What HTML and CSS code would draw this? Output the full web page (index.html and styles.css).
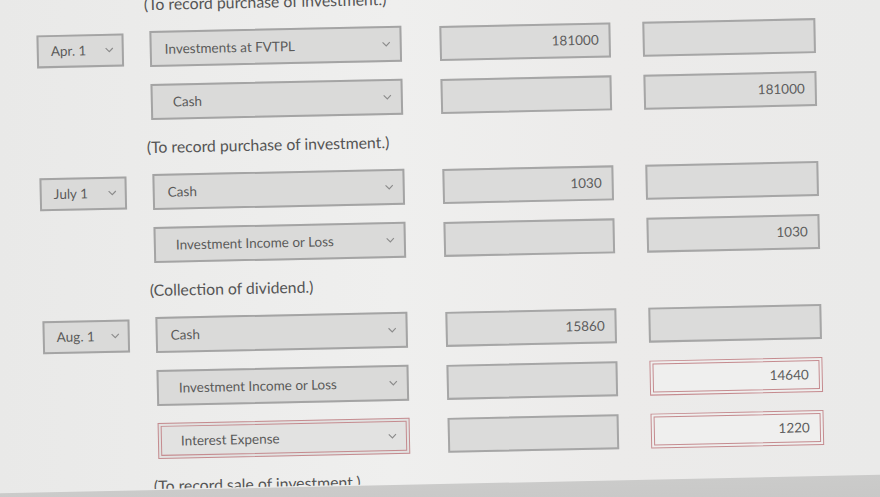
FILE: index.html
```html
<!DOCTYPE html>
<html lang="en">
<head>
<meta charset="utf-8">
<title>Journal entries</title>
<link rel="stylesheet" href="styles.css">
</head>
<body>
<div class="page">
  <div class="sheet">
    <p class="note">(To record purchase of investment.)</p>

    <div class="row">
      <div class="cell"><div class="select date"><span>Apr. 1</span><svg class="chev" viewBox="0 0 10 6"><polyline points="1,1 5,5 9,1"/></svg></div></div>
      <div class="cell"><div class="select account"><span>Investments at FVTPL</span><svg class="chev" viewBox="0 0 10 6"><polyline points="1,1 5,5 9,1"/></svg></div></div>
      <div class="cell"><div class="amount debit">181000</div></div>
      <div class="cell"><div class="amount credit"></div></div>
    </div>

    <div class="row">
      <div class="cell"></div>
      <div class="cell"><div class="select account indent"><span>Cash</span><svg class="chev" viewBox="0 0 10 6"><polyline points="1,1 5,5 9,1"/></svg></div></div>
      <div class="cell"><div class="amount debit"></div></div>
      <div class="cell"><div class="amount credit">181000</div></div>
    </div>

    <p class="note">(To record purchase of investment.)</p>

    <div class="row">
      <div class="cell"><div class="select date"><span>July 1</span><svg class="chev" viewBox="0 0 10 6"><polyline points="1,1 5,5 9,1"/></svg></div></div>
      <div class="cell"><div class="select account"><span>Cash</span><svg class="chev" viewBox="0 0 10 6"><polyline points="1,1 5,5 9,1"/></svg></div></div>
      <div class="cell"><div class="amount debit">1030</div></div>
      <div class="cell"><div class="amount credit"></div></div>
    </div>

    <div class="row">
      <div class="cell"></div>
      <div class="cell"><div class="select account indent"><span>Investment Income or Loss</span><svg class="chev" viewBox="0 0 10 6"><polyline points="1,1 5,5 9,1"/></svg></div></div>
      <div class="cell"><div class="amount debit"></div></div>
      <div class="cell"><div class="amount credit">1030</div></div>
    </div>

    <p class="note">(Collection of dividend.)</p>

    <div class="row">
      <div class="cell"><div class="select date"><span>Aug. 1</span><svg class="chev" viewBox="0 0 10 6"><polyline points="1,1 5,5 9,1"/></svg></div></div>
      <div class="cell"><div class="select account"><span>Cash</span><svg class="chev" viewBox="0 0 10 6"><polyline points="1,1 5,5 9,1"/></svg></div></div>
      <div class="cell"><div class="amount debit">15860</div></div>
      <div class="cell"><div class="amount credit"></div></div>
    </div>

    <div class="row">
      <div class="cell"></div>
      <div class="cell"><div class="select account indent"><span>Investment Income or Loss</span><svg class="chev" viewBox="0 0 10 6"><polyline points="1,1 5,5 9,1"/></svg></div></div>
      <div class="cell"><div class="amount debit"></div></div>
      <div class="cell"><div class="amount credit wrong">14640</div></div>
    </div>

    <div class="row">
      <div class="cell"></div>
      <div class="cell"><div class="select account indent wrong"><span>Interest Expense</span><svg class="chev" viewBox="0 0 10 6"><polyline points="1,1 5,5 9,1"/></svg></div></div>
      <div class="cell"><div class="amount debit"></div></div>
      <div class="cell"><div class="amount credit wrong">1220</div></div>
    </div>

    <p class="note note-cut">(To record sale of investment.)</p>
    <div class="band"></div>
  </div>
</div>
</body>
</html>
```

FILE: styles.css
```css
html, body {
  margin: 0;
  padding: 0;
}

body {
  width: 880px;
  height: 497px;
  overflow: hidden;
  background: #ebebea;
  font-family: Lato, "Open Sans", sans-serif;
  color: #585858;
}

.page {
  width: 880px;
  height: 497px;
  overflow: hidden;
  background: linear-gradient(90deg, #e9e9e8 0%, #efefee 45%, #ecebea 70%, #eaeae9 100%);
}

.sheet {
  width: 880px;
  display: flex;
  flex-direction: column;
  gap: 17px;
  margin-top: -12px;
  transform: rotate(-1.2deg);
  transform-origin: 440px 261px;
}

.note {
  margin: 0 0 0 149px;
  height: 20px;
  line-height: 20px;
  font-size: 15.8px;
  color: #555;
  white-space: nowrap;
}

.note-cut {
  height: 13px;
  overflow: hidden;
  align-self: flex-start;
}

.row {
  display: grid;
  grid-template-columns: 113px 290px 203px 173px;
  padding-left: 41px;
  height: 36px;
  align-items: center;
}

.cell {
  display: flex;
  align-items: center;
}

.select {
  box-sizing: border-box;
  display: flex;
  align-items: center;
  justify-content: space-between;
  border: 2px solid #a4a4a4;
  background: #dadad9;
  font-size: 13.5px;
  color: #5a5a5a;
  white-space: nowrap;
}

.date {
  width: 87px;
  height: 33px;
  padding: 0 8px 0 12px;
}

.account {
  width: 252px;
  height: 36px;
  padding: 0 9px 0 13px;
}

.account.indent {
  padding-left: 20px;
}

.chev {
  width: 9px;
  height: 6px;
  flex: none;
  fill: none;
  stroke: #8c8c8c;
  stroke-width: 1.3;
}

.amount {
  box-sizing: border-box;
  height: 35px;
  border: 2px solid #a6a6a6;
  background: #dbdbda;
  font-size: 13.5px;
  color: #5c5c5c;
  text-align: right;
  line-height: 31px;
  padding-right: 10px;
}

.debit {
  width: 171px;
}

.credit {
  width: 173px;
}

.wrong {
  border: 4px double #c58b8f;
}

.account.wrong {
  background: #e2e2e1;
  padding-left: 19px;
}

.amount.wrong {
  background: #efefee;
  line-height: 27px;
}

.band {
  margin: -16px -60px 0;
  height: 60px;
  background: linear-gradient(180deg, #cbcbca 0%, #c4c4c3 100%);
}
```
